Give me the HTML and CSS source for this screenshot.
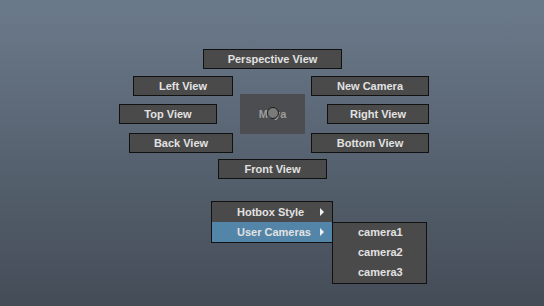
FILE: index.html
```html
<!DOCTYPE html>
<html lang="en">
<head>
  <meta charset="UTF-8" />
  <title>Hotbox</title>
  <link rel="stylesheet" href="styles.css">
</head>
<body>
  <div class="hotbox">
    <div class="row row-1">
      <div class="btn w-persp">Perspective View</div>
    </div>
    <div class="row row-2">
      <div class="btn w-left">Left View</div>
      <div class="btn w-new">New Camera</div>
    </div>
    <div class="row row-3">
      <div class="btn w-top">Top View</div>
      <div class="center">
        <span class="maya">Maya</span>
        <span class="cursor"></span>
      </div>
      <div class="btn w-right">Right View</div>
    </div>
    <div class="row row-4">
      <div class="btn w-back">Back View</div>
      <div class="btn w-bottom">Bottom View</div>
    </div>
    <div class="row row-5">
      <div class="btn w-front">Front View</div>
    </div>

    <div class="menu">
      <div class="item">Hotbox Style <span class="arrow"></span></div>
      <div class="item active">User Cameras <span class="arrow"></span>
        <div class="submenu">
          <div class="sub-item">camera1</div>
          <div class="sub-item">camera2</div>
          <div class="sub-item">camera3</div>
        </div>
      </div>
    </div>
  </div>
</body>
</html>
```

FILE: styles.css
```css
html, body {
  height: 100%;
}
body {
  margin: 0;
  background: linear-gradient(to bottom, #6b7a8b, #444c57);
  font-family: "Liberation Sans", Arial, sans-serif;
  font-size: 11px;
  font-weight: bold;
  color: #e2e2e2;
  overflow: hidden;
}
.hotbox {
  padding-top: 49px;
}
.row {
  display: flex;
  align-items: center;
  height: 20px;
}
.row-2 { margin-top: 7px; padding-left: 133px; gap: 78px; }
.row-3 { margin-top: 8px; padding-left: 119px; }
.row-4 { margin-top: 9px; padding-left: 129px; gap: 78px; }
.row-5 { margin-top: 6px; padding-left: 218px; }
.row-1 { padding-left: 203px; }

.btn {
  box-sizing: border-box;
  height: 20px;
  line-height: 18px;
  background: #4a4a4a;
  border: 1px solid #111;
  text-align: center;
  white-space: nowrap;
}
.w-persp { width: 139px; }
.w-left { width: 100px; }
.w-new { width: 118px; }
.w-top { width: 98px; }
.w-right { width: 102px; }
.w-back { width: 104px; }
.w-bottom { width: 118px; }
.w-front { width: 109px; }

.center {
  position: relative;
  flex: none;
  width: 65px;
  height: 40px;
  margin: 0 22px 0 23px;
  background: #4b4d51;
  display: flex;
  align-items: center;
  justify-content: center;
}
.maya {
  color: #9c9c9c;
}
.cursor {
  position: absolute;
  left: 27px;
  top: 13px;
  width: 10px;
  height: 10px;
  border-radius: 50%;
  background: #7a7a7a;
  border: 1px solid #1c1c1c;
}

.menu {
  box-sizing: border-box;
  width: 122px;
  margin: 22px 0 0 211px;
  border: 1px solid #111;
  background: #4a4a4a;
}
.item {
  position: relative;
  height: 20px;
  line-height: 20px;
  padding-left: 25px;
  white-space: nowrap;
}
.item.active {
  background: #5285a8;
}
.arrow {
  position: absolute;
  left: 108px;
  top: 6px;
  width: 0;
  height: 0;
  border-top: 4px solid transparent;
  border-bottom: 4px solid transparent;
  border-left: 4px solid #f0f0f0;
}
.submenu {
  position: absolute;
  left: 120px;
  top: 0;
  box-sizing: border-box;
  width: 95px;
  padding: 0;
  background: #4a4a4a;
  border: 1px solid #111;
}
.sub-item {
  height: 20px;
  line-height: 19px;
  padding-left: 25px;
}
```
